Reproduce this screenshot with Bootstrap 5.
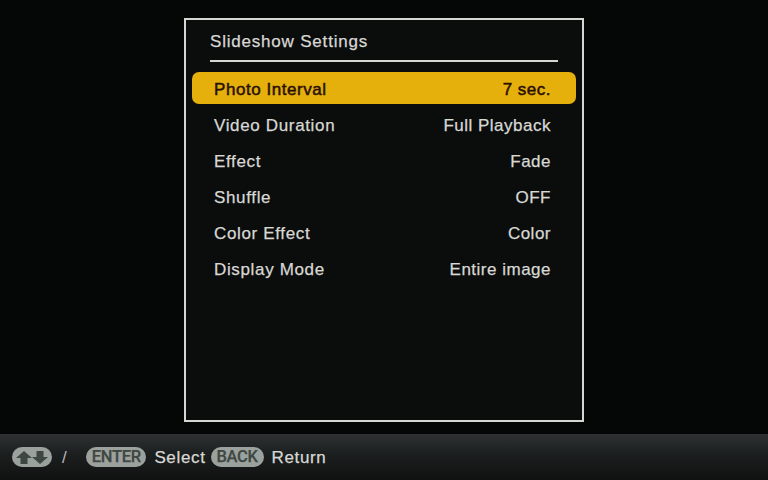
<!DOCTYPE html>
<html lang="en">
<head>
<meta charset="utf-8">
<title>Slideshow Settings</title>
<link href="https://cdn.jsdelivr.net/npm/bootstrap@5.3.0/dist/css/bootstrap.min.css" rel="stylesheet">
<style>
html,body{height:480px;overflow:hidden;}
body{width:768px;background:#050606;font-family:"Liberation Sans",Arial,sans-serif;color:#d8d8d4;letter-spacing:.65px;-webkit-text-stroke:.25px currentColor;}
.stage{height:434px;padding-top:18px;}
.panel-box{width:400px;height:404px;border:2px solid #d6d6d2;background:#0b0c0c;padding:0 6px;}
.panel-title{margin:0 18px;height:42px;border-bottom:2px solid #d6d6d2;font-size:17px;font-weight:400;letter-spacing:.8px;line-height:43px;}
.panel-head{margin-bottom:10px;}
.opt-row{height:32px;margin-bottom:4px;padding:0 25px 0 22px;font-size:17px;line-height:35px;}
.opt-value{letter-spacing:.5px;}
.opt-row.active-row{background:#e5b00c;color:#2a1000;border-radius:7px;-webkit-text-stroke:.5px currentColor;letter-spacing:.55px;}
.footer-bar{height:46px;background:linear-gradient(#2f3232 0,#1d2020 40%,#101212 100%);padding-left:12px;font-size:17px;color:#d8d8d4;}
.foot-label{padding-top:2px;}
.key-pill{height:20px;border-radius:10px;background:#9ba19c;color:#3f4743;font-family:Roboto,sans-serif;font-size:16.5px;font-weight:500;letter-spacing:-.3px;line-height:20px;}
.key-arrows{width:40px;margin-right:10px;}
.key-enter{width:60px;margin-left:19px;margin-right:8px;}
.key-back{width:53px;margin-left:5px;margin-right:8px;}
.slash{color:#b5b8b5;-webkit-text-stroke:0;}
</style>
</head>
<body>
<main class="stage d-flex justify-content-center">
  <section class="panel-box">
    <div class="panel-head"><h1 class="panel-title">Slideshow Settings</h1></div>
    <div class="d-flex justify-content-between opt-row active-row"><span>Photo Interval</span><span class="opt-value">7 sec.</span></div>
    <div class="d-flex justify-content-between opt-row"><span>Video Duration</span><span class="opt-value">Full Playback</span></div>
    <div class="d-flex justify-content-between opt-row"><span>Effect</span><span class="opt-value">Fade</span></div>
    <div class="d-flex justify-content-between opt-row"><span>Shuffle</span><span class="opt-value">OFF</span></div>
    <div class="d-flex justify-content-between opt-row"><span>Color Effect</span><span class="opt-value">Color</span></div>
    <div class="d-flex justify-content-between opt-row"><span>Display Mode</span><span class="opt-value">Entire image</span></div>
  </section>
</main>
<footer class="footer-bar d-flex align-items-center">
  <span class="key-pill key-arrows d-flex align-items-center justify-content-center">
    <svg width="34" height="15" viewBox="0 0 34 15" aria-hidden="true"><path d="M9 1 1 8h4.500v6h7V8H17zM25 14l8-7h-4.500V1h-7v6H17z" fill="#3f4743"/></svg>
  </span>
  <span class="slash foot-label">/</span>
  <span class="key-pill key-enter text-center">ENTER</span>
  <span class="foot-label">Select</span>
  <span class="key-pill key-back text-center">BACK</span>
  <span class="foot-label">Return</span>
</footer>
<script src="https://cdn.jsdelivr.net/npm/bootstrap@5.3.0/dist/js/bootstrap.bundle.min.js"></script>
</body>
</html>
